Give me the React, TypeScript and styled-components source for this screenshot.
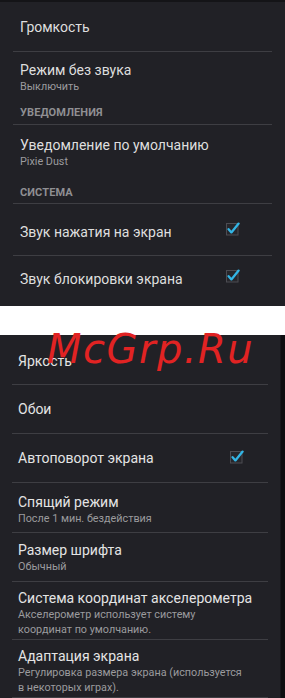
import React from 'react';
import styled, { createGlobalStyle } from 'styled-components';

const Global = createGlobalStyle`
  html, body { margin: 0; padding: 0; background: #ffffff; }
  body {
    width: 285px;
    height: 698px;
    overflow: hidden;
    font-family: Roboto, "Noto Sans", "DejaVu Sans", sans-serif;
    -webkit-font-smoothing: antialiased;
  }
`;

const Page = styled.div`
  position: relative;
  width: 285px;
  height: 698px;
  display: flex;
  flex-direction: column;
  background: #ffffff;
`;

const Panel = styled.div<{ $h: number; $pad: number; $edge?: boolean; $gap?: number }>`
  box-sizing: border-box;
  height: ${(p) => p.$h}px;
  margin-top: ${(p) => p.$gap ?? 0}px;
  width: 285px;
  padding: 0 ${(p) => p.$pad + (p.$edge ? 5 : 0)}px 0 ${(p) => p.$pad}px;
  background: ${(p) =>
    p.$edge
      ? 'linear-gradient(to right, #212126 0, #212126 280px, #0e0e10 281px, #0e0e10 100%)'
      : '#212126'};
  box-shadow: ${(p) => (p.$edge ? 'none' : 'inset 0 2px 0 #141417')};
  display: flex;
  flex-direction: column;
  overflow: hidden;
`;

const Row = styled.div<{ $h: number; $pt: number; $indent: number; $pr: number }>`
  box-sizing: border-box;
  height: ${(p) => p.$h}px;
  flex: 0 0 auto;
  padding: ${(p) => p.$pt}px ${(p) => p.$pr}px 0 ${(p) => p.$indent}px;
  display: flex;
  align-items: flex-start;
  justify-content: space-between;
`;

const Texts = styled.div`
  display: flex;
  flex-direction: column;
  min-width: 0;
`;

const Title = styled.div<{ $light?: boolean }>`
  font-size: 14px;
  line-height: 18px;
  color: ${(p) => (p.$light ? '#e4e4e4' : '#dedede')};
  white-space: nowrap;
`;

const Sub = styled.div`
  font-size: 10.8px;
  line-height: 15px;
  color: #9b9b9e;
  white-space: nowrap;
`;

const Header = styled.div<{ $pt: number }>`
  box-sizing: border-box;
  height: 26px;
  flex: 0 0 auto;
  padding: ${(p) => p.$pt}px 0 0 7px;
  font-size: 11px;
  line-height: 14px;
  font-weight: 700;
  color: #8f8f93;
  letter-spacing: 0.1px;
`;

const Divider = styled.div`
  height: 1px;
  flex: 0 0 auto;
  background: #3e3e43;
`;

const CheckWrap = styled.div<{ $dy: number }>`
  width: 14px;
  height: 14px;
  margin-top: ${(p) => p.$dy}px;
  flex: 0 0 auto;
`;

const Watermark = styled.div`
  position: absolute;
  left: 47px;
  top: 329px;
  font-family: "DejaVu Sans", sans-serif;
  font-style: italic;
  font-weight: 200;
  font-size: 40px;
  line-height: 40px;
  letter-spacing: 1.5px;
  color: #e12323;
  pointer-events: none;
  white-space: nowrap;
`;

const Check = ({ dy }: { dy: number }) => (
  <CheckWrap $dy={dy}>
    <svg width="14" height="14" viewBox="0 0 14 14">
      <rect x="0.5" y="1.5" width="11.5" height="11.5" fill="#26262b" stroke="#4c4c52" strokeWidth="1" />
      <path d="M2.6 7.2 L5.4 10.4 L12.6 1.6" fill="none" stroke="#33b5e5" strokeWidth="2.3" strokeLinecap="round" strokeLinejoin="round" />
    </svg>
  </CheckWrap>
);

type Item =
  | { kind: 'row'; h: number; pt: number; title: string; sub?: string[]; check?: number }
  | { kind: 'header'; pt: number; text: string }
  | { kind: 'div' };

const top: Item[] = [
  { kind: 'row', h: 51, pt: 18, title: 'Громкость' },
  { kind: 'div' },
  { kind: 'row', h: 46, pt: 9, title: 'Режим без звука', sub: ['Выключить'] },
  { kind: 'header', pt: 8, text: 'УВЕДОМЛЕНИЯ' },
  { kind: 'div' },
  { kind: 'row', h: 52, pt: 11, title: 'Уведомление по умолчанию', sub: ['Pixie Dust'] },
  { kind: 'header', pt: 9, text: 'СИСТЕМА' },
  { kind: 'div' },
  { kind: 'row', h: 51, pt: 19, title: 'Звук нажатия на экран', check: -2 },
  { kind: 'div' },
  { kind: 'row', h: 50, pt: 14, title: 'Звук блокировки экрана', check: -2 },
];

const bottom: Item[] = [
  { kind: 'row', h: 49, pt: 17, title: 'Яркость' },
  { kind: 'div' },
  { kind: 'row', h: 48, pt: 15, title: 'Обои' },
  { kind: 'div' },
  { kind: 'row', h: 48, pt: 15, title: 'Автоповорот экрана', check: 0 },
  { kind: 'div' },
  { kind: 'row', h: 49, pt: 10, title: 'Спящий режим', sub: ['После 1 мин. бездействия'] },
  { kind: 'div' },
  { kind: 'row', h: 48, pt: 8, title: 'Размер шрифта', sub: ['Обычный'] },
  { kind: 'div' },
  {
    kind: 'row',
    h: 57,
    pt: 7,
    title: 'Система координат акселерометра',
    sub: ['Акселерометр использует систему', 'координат по умолчанию.'],
  },
  { kind: 'div' },
  {
    kind: 'row',
    h: 57,
    pt: 7,
    title: 'Адаптация экрана',
    sub: ['Регулировка размера экрана (используется', 'в некоторых играх).'],
  },
  { kind: 'div' },
];

const List = ({ items, indent, pr, light }: { items: Item[]; indent: number; pr: number; light?: boolean }) => (
  <>
    {items.map((it, i) => {
      if (it.kind === 'div') return <Divider key={i} />;
      if (it.kind === 'header')
        return (
          <Header key={i} $pt={it.pt}>
            {it.text}
          </Header>
        );
      return (
        <Row key={i} $h={it.h} $pt={it.pt} $indent={indent} $pr={pr}>
          <Texts>
            <Title $light={light}>{it.title}</Title>
            {it.sub?.map((s, j) => (
              <Sub key={j}>{s}</Sub>
            ))}
          </Texts>
          {it.check !== undefined && <Check dy={it.check} />}
        </Row>
      );
    })}
  </>
);

export default function App() {
  return (
    <Page>
      <Global />
      <Panel $h={306} $pad={13}>
        <List items={top} indent={7} pr={32} />
      </Panel>
      <Panel $h={363} $pad={12} $edge $gap={29}>
        <List items={bottom} indent={6} pr={24} light />
      </Panel>
      <Watermark>McGrp.Ru</Watermark>
    </Page>
  );
}
